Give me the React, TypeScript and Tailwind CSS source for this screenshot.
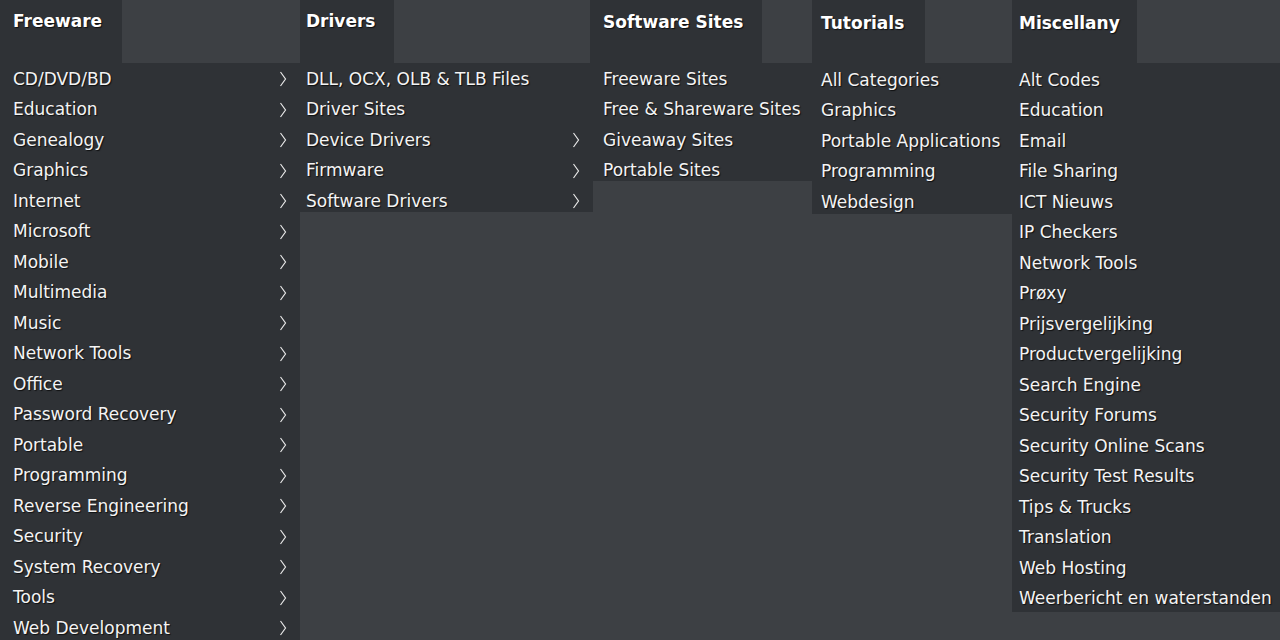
import React from "react";

type Item = { label: string; sub?: boolean };

interface Column {
  title: string;
  width: string;
  pad: string;
  tab: string;
  head: string;
  list: string;
  items: Item[];
}

const s = (label: string): Item => ({ label, sub: true });
const p = (label: string): Item => ({ label });

const columns: Column[] = [
  {
    title: "Freeware",
    width: "w-[300px]",
    pad: "pl-[13px]",
    tab: "w-[122px]",
    head: "pt-[11px]",
    list: "pt-[1px]",
    items: [
      s("CD/DVD/BD"),
      s("Education"),
      s("Genealogy"),
      s("Graphics"),
      s("Internet"),
      s("Microsoft"),
      s("Mobile"),
      s("Multimedia"),
      s("Music"),
      s("Network Tools"),
      s("Office"),
      s("Password Recovery"),
      s("Portable"),
      s("Programming"),
      s("Reverse Engineering"),
      s("Security"),
      s("System Recovery"),
      s("Tools"),
      s("Web Development"),
    ],
  },
  {
    title: "Drivers",
    width: "w-[293px]",
    pad: "pl-[6px]",
    tab: "w-[94px]",
    head: "pt-[11px]",
    list: "h-[149px] pt-[1px]",
    items: [
      p("DLL, OCX, OLB & TLB Files"),
      p("Driver Sites"),
      s("Device Drivers"),
      s("Firmware"),
      s("Software Drivers"),
    ],
  },
  {
    title: "Software Sites",
    width: "w-[219px]",
    pad: "pl-[10px]",
    tab: "-ml-[3px] w-[172px] !pl-[13px]",
    head: "pt-[12px]",
    list: "h-[118px] pt-[1px]",
    items: [
      p("Freeware Sites"),
      p("Free & Shareware Sites"),
      p("Giveaway Sites"),
      p("Portable Sites"),
    ],
  },
  {
    title: "Tutorials",
    width: "w-[200px]",
    pad: "pl-[9px]",
    tab: "w-[113px]",
    head: "pt-[13px]",
    list: "h-[151px] pt-[2px]",
    items: [
      p("All Categories"),
      p("Graphics"),
      p("Portable Applications"),
      p("Programming"),
      p("Webdesign"),
    ],
  },
  {
    title: "Miscellany",
    width: "w-[268px]",
    pad: "pl-[7px]",
    tab: "w-[125px]",
    head: "pt-[13px]",
    list: "h-[549px] pt-[2px]",
    items: [
      p("Alt Codes"),
      p("Education"),
      p("Email"),
      p("File Sharing"),
      p("ICT Nieuws"),
      p("IP Checkers"),
      p("Network Tools"),
      p("Prøxy"),
      p("Prijsvergelijking"),
      p("Productvergelijking"),
      p("Search Engine"),
      p("Security Forums"),
      p("Security Online Scans"),
      p("Security Test Results"),
      p("Tips & Trucks"),
      p("Translation"),
      p("Web Hosting"),
      p("Weerbericht en waterstanden"),
    ],
  },
];

function Chevron() {
  return (
    <svg width="8" height="16" viewBox="0 0 8 16" className="shrink-0">
      <polyline
        points="1.5,1 6.5,8 1.5,15"
        fill="none"
        stroke="#e8e8e8"
        strokeWidth="1.2"
      />
    </svg>
  );
}

export default function App() {
  return (
    <div className="flex h-[640px] w-[1280px] overflow-hidden bg-[#3d4044] font-['DejaVu_Sans',Verdana,sans-serif] text-[17px] text-[#f4f4f4] [text-shadow:1px_1px_1px_rgba(0,0,0,0.7)]">
      {columns.map((col) => (
        <div key={col.title} className={`flex shrink-0 flex-col ${col.width}`}>
          <div
            className={`h-[63px] shrink-0 bg-[#2f3236] font-bold leading-[20px] text-white ${col.head} ${col.pad} ${col.tab}`}
          >
            {col.title}
          </div>
          <ul className={`shrink-0 bg-[#2f3236] ${col.list}`}>
            {col.items.map((it) => (
              <li
                key={it.label}
                className={`flex h-[30.5px] items-center justify-between whitespace-nowrap pr-[13px] ${col.pad}`}
              >
                <span>{it.label}</span>
                {it.sub && <Chevron />}
              </li>
            ))}
          </ul>
        </div>
      ))}
    </div>
  );
}
